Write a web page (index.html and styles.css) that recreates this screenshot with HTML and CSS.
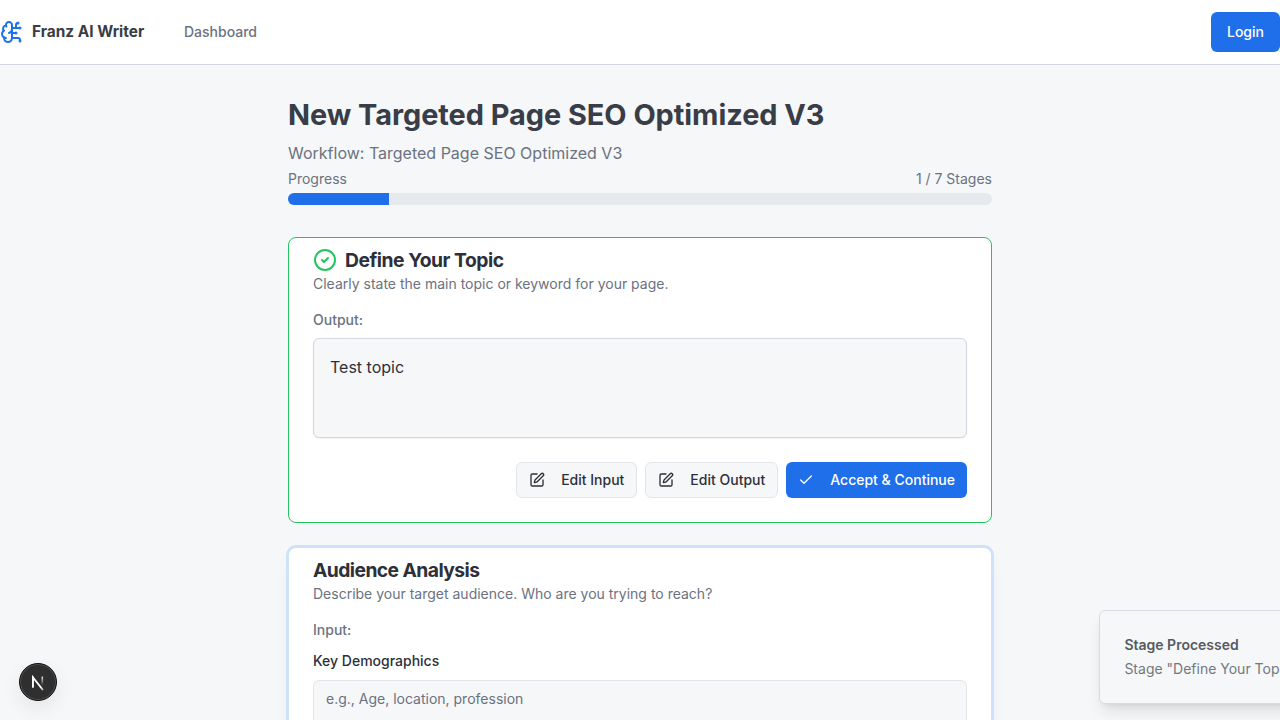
FILE: index.html
```html
<!DOCTYPE html>
<html lang="en">
<head>
<meta charset="utf-8">
<title>Franz AI Writer</title>
<link rel="stylesheet" href="styles.css">
</head>
<body>
<header class="topbar">
  <a class="brand">
    <svg class="icon brand-icon" viewBox="0 0 24 24"><path d="M12 5a3 3 0 1 0-5.997.125 4 4 0 0 0-2.526 5.77 4 4 0 0 0 .556 6.588A4 4 0 1 0 12 18Z"/><path d="M9 13a4.5 4.5 0 0 0 3-4"/><path d="M6.003 5.125A3 3 0 0 0 6.401 6.5"/><path d="M3.477 10.896a4 4 0 0 1 .585-.396"/><path d="M6 18a4 4 0 0 1-1.967-.516"/><path d="M12 13h4"/><path d="M12 18h6a2 2 0 0 1 2 2v1"/><path d="M12 8h8"/><path d="M16 8V5a2 2 0 0 1 2-2"/><circle cx="16" cy="13" r=".5"/><circle cx="18" cy="3" r=".5"/><circle cx="20" cy="21" r=".5"/><circle cx="20" cy="8" r=".5"/></svg>
    <span class="brand-name">Franz AI Writer</span>
  </a>
  <nav class="nav"><a>Dashboard</a></nav>
  <button class="login">Login</button>
</header>

<main class="page">
  <h1 class="page-title">New Targeted Page SEO Optimized V3</h1>
  <p class="workflow">Workflow: Targeted Page SEO Optimized V3</p>
  <div class="progress-row"><span>Progress</span><span>1 / 7 Stages</span></div>
  <div class="progress"><div class="progress-fill" style="width: 14.2857%"></div></div>

  <section class="card card-done">
    <div class="card-head">
      <svg class="icon done-icon" viewBox="0 0 24 24"><circle cx="12" cy="12" r="10"/><path d="m9 12 2 2 4-4"/></svg>
      <h2 class="card-title title-topic">Define Your Topic</h2>
    </div>
    <p class="card-desc">Clearly state the main topic or keyword for your page.</p>
    <p class="section-label">Output:</p>
    <div class="output">Test topic</div>
    <div class="actions">
      <button class="btn"><svg class="icon btn-icon" viewBox="0 0 24 24"><path d="M12 3H5a2 2 0 0 0-2 2v14a2 2 0 0 0 2 2h14a2 2 0 0 0 2-2v-7"/><path d="M18.375 2.625a1 1 0 0 1 3 3l-9.013 9.014a2 2 0 0 1-.853.505l-2.873.84a.5.5 0 0 1-.62-.62l.84-2.873a2 2 0 0 1 .506-.852z"/></svg>Edit Input</button>
      <button class="btn"><svg class="icon btn-icon" viewBox="0 0 24 24"><path d="M12 3H5a2 2 0 0 0-2 2v14a2 2 0 0 0 2 2h14a2 2 0 0 0 2-2v-7"/><path d="M18.375 2.625a1 1 0 0 1 3 3l-9.013 9.014a2 2 0 0 1-.853.505l-2.873.84a.5.5 0 0 1-.62-.62l.84-2.873a2 2 0 0 1 .506-.852z"/></svg>Edit Output</button>
      <button class="btn btn-primary"><svg class="icon btn-icon" viewBox="0 0 24 24"><path d="M20 6 9 17l-5-5"/></svg>Accept &amp; Continue</button>
    </div>
  </section>

  <section class="card card-active">
    <div class="card-head"><h2 class="card-title title-audience">Audience Analysis</h2></div>
    <p class="card-desc">Describe your target audience. Who are you trying to reach?</p>
    <p class="section-label">Input:</p>
    <label class="field-label" for="demographics">Key Demographics</label>
    <textarea class="field" id="demographics" placeholder="e.g., Age, location, profession"></textarea>
  </section>
</main>

<aside class="toast">
  <div class="toast-title">Stage Processed</div>
  <div class="toast-text">Stage "Define Your Topic" processed.</div>
</aside>

<div class="dev-badge">
  <svg class="dev-logo" viewBox="0 0 40 40">
    <defs>
      <linearGradient id="diag" x1="18" y1="22" x2="27" y2="34" gradientUnits="userSpaceOnUse"><stop offset=".4" stop-color="#fff"/><stop offset="1" stop-color="#fff" stop-opacity="0"/></linearGradient>
      <linearGradient id="stem" x1="0" y1="13" x2="0" y2="24" gradientUnits="userSpaceOnUse"><stop stop-color="#fff"/><stop offset="1" stop-color="#fff" stop-opacity="0"/></linearGradient>
    </defs>
    <path d="M14.3 26V14.8L25.6 29" fill="none" stroke="url(#diag)" stroke-width="1.9"/>
    <path d="M14.3 26V14" stroke="#fff" stroke-width="1.9"/>
    <path d="M24.8 14V25" stroke="url(#stem)" stroke-width="1.7"/>
  </svg>
</div>
</body>
</html>
```
FILE: styles.css
```css
* { box-sizing: border-box; margin: 0; padding: 0; }
html, body { height: 720px; overflow: hidden; }
body {
  background: #f5f7f9;
  color: #2d3039;
  font-family: Inter, sans-serif;
  font-size: 14px;
  line-height: 20px;
}
button, textarea { font: inherit; }
.icon { fill: none; stroke: currentColor; stroke-width: 2; stroke-linecap: round; stroke-linejoin: round; flex: none; }

.topbar { display: flex; align-items: center; height: 65px; background: #fff; border-bottom: 1px solid #d2d7df; }
.brand { display: flex; align-items: center; gap: 8px; }
.brand-icon { width: 24px; height: 24px; color: #1f6feb; }
.brand-name { width: 112px; font-size: 15.4px; font-weight: 700; color: #383d47; white-space: nowrap; }
.nav { margin-left: 40px; font-weight: 500; color: #6b7280; }
.login { margin-left: auto; width: 69px; height: 40px; border: 0; border-radius: 6px; background: #1f6feb; color: #fff; font-weight: 500; }

.page { width: 704px; margin: 0 auto; padding-top: 32px; }
.page-title { font-size: 28.9px; line-height: 36px; font-weight: 700; letter-spacing: -.04px; color: #383d47; white-space: nowrap; }
.workflow { margin-top: 8px; font-size: 16px; line-height: 24px; color: #6b7280; }
.progress-row { display: flex; justify-content: space-between; margin-top: 4px; color: #6b7280; }
.progress { height: 12px; margin-top: 4px; border-radius: 6px; background: #e6e9ee; overflow: hidden; }
.progress-fill { height: 100%; background: #1f6feb; }

.card { background: #fff; border: 1px solid; border-radius: 8px; padding: 8px 24px 24px; }
.card-done { height: 286px; margin-top: 32px; border-color: #22c55e; }
.card-active { height: 400px; margin-top: 24px; border-color: #d0e1fb; box-shadow: 0 0 0 2px #d0e1fb, 0 10px 15px -1px rgba(31, 50, 90, .05); }
.card-head { display: flex; align-items: center; gap: 8px; height: 28px; }
.done-icon { width: 24px; height: 24px; color: #22c55e; }
.card-title { font-size: 19.3px; line-height: 28px; font-weight: 700; white-space: nowrap; }
.title-topic { letter-spacing: -.48px; }
.title-audience { letter-spacing: -.57px; }
.card-desc { color: #6b7280; }
.section-label { margin-top: 16px; font-weight: 500; color: #6b7280; }
.output { height: 100px; margin-top: 8px; padding: 16px; border: 1px solid #d2d7df; border-radius: 6px; background: #f5f7f9; font-size: 16px; line-height: 24px; box-shadow: 0 1px 2px rgba(0, 0, 0, .05); }
.actions { display: flex; justify-content: flex-end; gap: 8px; margin-top: 24px; }
.btn { display: flex; align-items: center; gap: 16px; height: 36px; padding: 0 12px; border: 1px solid #e2e5ea; border-radius: 6px; background: #f5f7f9; color: #2d3039; font-weight: 500; white-space: nowrap; }
.btn-icon { width: 16px; height: 16px; }
.btn-primary { border: 0; background: #1f6feb; color: #fff; }
.field-label { display: block; margin-top: 11px; font-weight: 500; }
.field { display: block; width: 100%; height: 80px; margin-top: 9px; padding: 8px 12px; border: 1px solid #e2e5ea; border-radius: 6px; background: #f5f7f9; resize: none; }
.field::placeholder { color: #6b7280; opacity: 1; }

.toast { position: absolute; left: 1099.4px; top: 610px; width: 388px; height: 94px; padding: 24px; border: 1px solid #d6dce2; border-radius: 6px; background: #f5f7f9; box-shadow: 0 10px 15px -3px rgba(0, 0, 0, .1), 0 4px 6px -4px rgba(0, 0, 0, .1); white-space: nowrap; }
.toast-title { font-weight: 600; color: #575a61; }
.toast-text { margin-top: 4px; color: #74777d; }

.dev-badge { position: absolute; left: 19px; top: 663px; width: 38px; height: 38px; border-radius: 50%; background: #2f2f2f; border: 1px solid #111; box-shadow: inset 0 0 0 1px #505050, 0 8px 20px rgba(0, 0, 0, .07); }
.dev-logo { display: block; width: 36px; height: 36px; }
```
